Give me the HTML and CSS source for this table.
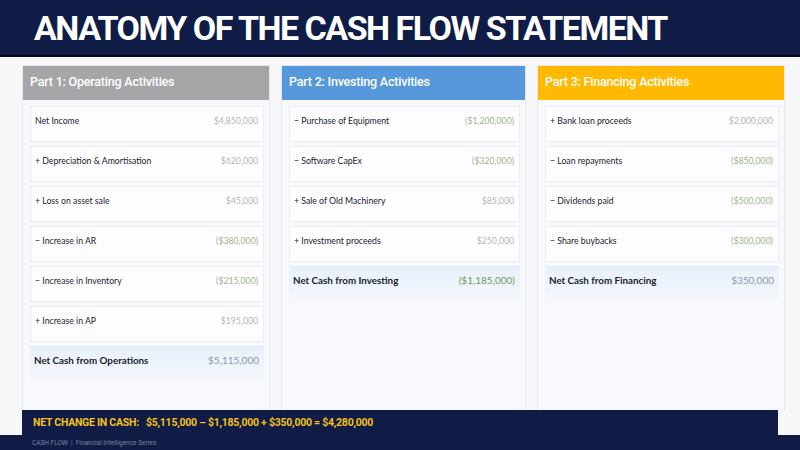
FILE: index.html
```html
<!DOCTYPE html>
<html>
<head>
<meta charset="utf-8">
<link rel="stylesheet" href="styles.css">
</head>
<body>
<header class="top">
  <h1 class="title">ANATOMY OF THE CASH FLOW STATEMENT</h1>
</header>
<main class="cols">
  <section class="col">
    <div class="col-head gray">Part 1: Operating Activities</div>
    <div class="rows">
      <div class="row"><span class="lbl">Net Income</span><span class="val">$4,850,000</span></div>
      <div class="row"><span class="lbl">+ Depreciation &amp; Amortisation</span><span class="val">$620,000</span></div>
      <div class="row"><span class="lbl">+ Loss on asset sale</span><span class="val">$45,000</span></div>
      <div class="row"><span class="lbl">− Increase in AR</span><span class="val neg">($380,000)</span></div>
      <div class="row"><span class="lbl">− Increase in Inventory</span><span class="val neg">($215,000)</span></div>
      <div class="row"><span class="lbl">+ Increase in AP</span><span class="val">$195,000</span></div>
      <div class="row total"><span class="lbl">Net Cash from Operations</span><span class="val">$5,115,000</span></div>
    </div>
  </section>
  <section class="col">
    <div class="col-head blue">Part 2: Investing Activities</div>
    <div class="rows">
      <div class="row"><span class="lbl">− Purchase of Equipment</span><span class="val neg">($1,200,000)</span></div>
      <div class="row"><span class="lbl">− Software CapEx</span><span class="val neg">($320,000)</span></div>
      <div class="row"><span class="lbl">+ Sale of Old Machinery</span><span class="val">$85,000</span></div>
      <div class="row"><span class="lbl">+ Investment proceeds</span><span class="val">$250,000</span></div>
      <div class="row total"><span class="lbl">Net Cash from Investing</span><span class="val neg-strong">($1,185,000)</span></div>
    </div>
  </section>
  <section class="col">
    <div class="col-head yellow">Part 3: Financing Activities</div>
    <div class="rows">
      <div class="row"><span class="lbl">+ Bank loan proceeds</span><span class="val">$2,000,000</span></div>
      <div class="row"><span class="lbl">− Loan repayments</span><span class="val neg">($850,000)</span></div>
      <div class="row"><span class="lbl">− Dividends paid</span><span class="val neg">($500,000)</span></div>
      <div class="row"><span class="lbl">− Share buybacks</span><span class="val neg">($300,000)</span></div>
      <div class="row total"><span class="lbl">Net Cash from Financing</span><span class="val">$350,000</span></div>
    </div>
  </section>
</main>
<div class="summary">
  <div class="net-bar">NET CHANGE IN CASH:&nbsp;&nbsp; $5,115,000 – $1,185,000 + $350,000 = $4,280,000</div>
</div>
<footer class="foot">CASH FLOW &nbsp;|&nbsp; Financial Intelligence Series</footer>
</body>
</html>
```
FILE: styles.css
```css
* { box-sizing: border-box; }
html, body { margin: 0; padding: 0; }
body {
  width: 800px;
  height: 450px;
  overflow: hidden;
  background: #f6f7f9;
  font-family: Lato, "Open Sans", sans-serif;
}
.top {
  height: 57px;
  background: #0f1c45;
  border-bottom: 2px solid #050b1f;
  display: flex;
  align-items: center;
  padding-left: 34px;
}
.title {
  margin: 0;
  color: #ffffff;
  font-family: Roboto, "Liberation Sans", sans-serif;
  font-weight: 700;
  font-size: 34px;
  letter-spacing: -1.5px;
  line-height: 1;
  padding-top: 1px;
}
.cols {
  height: 353px;
  padding: 8px 15px 0 22px;
  display: grid;
  grid-template-columns: 248px 245px 248px;
  column-gap: 11px;
}
.col {
  background: #f8f9fc;
  border: 1px solid #e6e8ee;
  border-bottom: none;
  display: flex;
  flex-direction: column;
  overflow: hidden;
}
.col-head {
  height: 35px;
  margin: -1px -1px 0 -1px;
  display: flex;
  align-items: center;
  padding-left: 8px;
  padding-bottom: 2px;
  color: #ffffff;
  font-family: Roboto, "Liberation Sans", sans-serif;
  font-weight: 500;
  font-size: 12.5px;
  letter-spacing: -0.2px;
}
.gray { background: #a6a6a8; }
.blue { background: #5698db; }
.yellow { background: #ffb900; }
.rows {
  padding: 6px 5px 0 7px;
  display: flex;
  flex-direction: column;
  gap: 4px;
}
.row {
  height: 36px;
  background: #fdfdff;
  border: 1px solid #eceef3;
  display: flex;
  justify-content: space-between;
  align-items: flex-start;
  padding: 8px 5px 0 4px;
  font-size: 8.7px;
  line-height: 12px;
}
.lbl { color: #23232e; }
.val { color: #b3b6be; }
.val.neg { color: #a4b28c; }
.row.total {
  border: none;
  border-top: 1px solid #e3eaf5;
  background: linear-gradient(#e8f0fb, #f5f8fd);
  padding-top: 7px;
}
.row.total .lbl {
  font-weight: 700;
  font-size: 9.8px;
  color: #1b1d2c;
}
.row.total .val {
  font-size: 10px;
  color: #8f98aa;
}
.row.total .val.neg-strong { color: #6f9b55; }
.summary {
  padding-left: 22px;
}
.net-bar {
  width: 756px;
  height: 25px;
  background: #101c45;
  display: flex;
  align-items: center;
  padding-left: 11px;
  color: #f4c21a;
  font-family: Roboto, "Liberation Sans", sans-serif;
  font-weight: 700;
  font-size: 10.5px;
  letter-spacing: -0.25px;
}
.foot {
  height: 15px;
  background: #101c45;
  color: #7a83a0;
  font-family: Roboto, "Liberation Sans", sans-serif;
  font-size: 6.5px;
  padding-left: 32px;
  display: flex;
  align-items: center;
}
```
